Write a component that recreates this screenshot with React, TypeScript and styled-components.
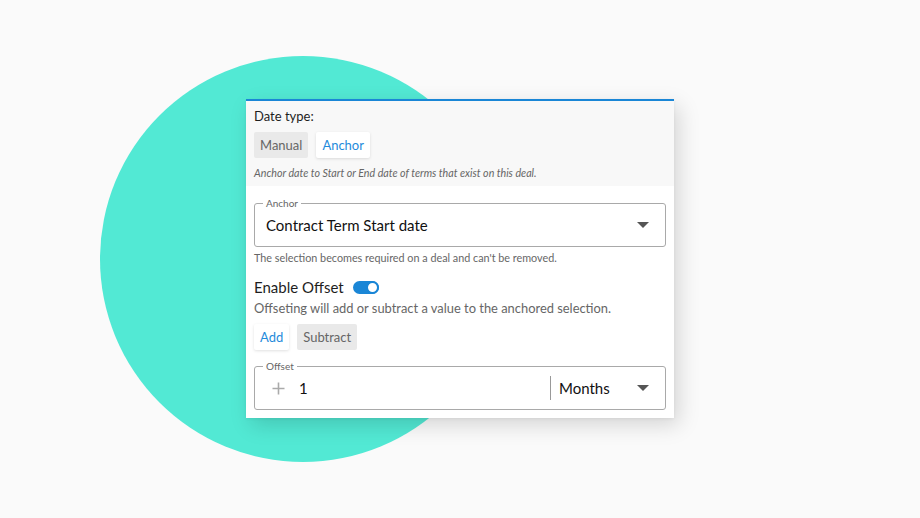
import React from "react";
import styled, { createGlobalStyle } from "styled-components";

const Global = createGlobalStyle`
  html, body { margin: 0; padding: 0; background: #fafafa; }
  body { font-family: Lato, "Noto Sans", sans-serif; }
`;

const Stage = styled.div`
  position: relative;
  width: 920px;
  height: 518px;
  overflow: hidden;
  background: #fafafa;
  display: flex;
  align-items: flex-start;
  padding: 99px 0 0 246px;
  box-sizing: border-box;
`;

const Circle = styled.div`
  position: absolute;
  left: 100px;
  top: 56px;
  width: 406px;
  height: 406px;
  border-radius: 50%;
  background: #52e9d4;
`;

const Card = styled.div`
  position: relative;
  width: 428px;
  background: #fff;
  border-top: 2px solid #1a86d6;
  box-shadow: 5px 7px 20px rgba(0, 0, 0, 0.15), 0 1px 3px rgba(0, 0, 0, 0.06);
  display: flex;
  flex-direction: column;
`;

const TopSection = styled.div`
  background: #f8f8f8;
  padding: 7px 8px 6px;
  display: flex;
  flex-direction: column;
`;

const Label = styled.div`
  font-size: 13px;
  line-height: 16px;
  color: #1e1e1e;
`;

const ButtonRow = styled.div<{ $mt: number }>`
  display: flex;
  gap: 8px;
  margin-top: ${(p) => p.$mt}px;
`;

const Choice = styled.div<{ $active?: boolean }>`
  height: 26px;
  padding: 0 6px;
  display: flex;
  align-items: center;
  font-size: 13px;
  border-radius: 2px;
  color: ${(p) => (p.$active ? "#1f8bdb" : "#666")};
  background: ${(p) => (p.$active ? "#fff" : "#e9e9e9")};
  box-shadow: ${(p) => (p.$active ? "0 1px 3px rgba(0,0,0,0.12)" : "none")};
`;

const Note = styled.div`
  margin-top: 8px;
  font-size: 10.7px;
  line-height: 14px;
  font-style: italic;
  color: #666;
`;

const Body = styled.div`
  padding: 17px 8px 8px;
  display: flex;
  flex-direction: column;
`;

const Field = styled.div`
  position: relative;
  height: 44px;
  border: 1px solid #a9a9a9;
  border-radius: 3px;
  box-sizing: border-box;
  display: flex;
  align-items: center;
  padding: 0 16px 0 11px;
`;

const Legend = styled.span`
  position: absolute;
  left: 8px;
  top: -7px;
  padding: 0 3px;
  background: #fff;
  font-size: 10px;
  line-height: 12px;
  color: #666;
`;

const Value = styled.div`
  flex: 1;
  font-size: 15px;
  color: #111;
`;

const Caret = styled.div`
  width: 0;
  height: 0;
  border-left: 6px solid transparent;
  border-right: 6px solid transparent;
  border-top: 6px solid #555;
`;

const Helper = styled.div`
  margin-top: 5px;
  font-size: 10.8px;
  line-height: 12px;
  color: #666;
`;

const OffsetHeader = styled.div`
  margin-top: 14px;
  display: flex;
  align-items: center;
  gap: 9px;
  font-size: 15px;
  line-height: 18px;
  color: #1e1e1e;
`;

const Toggle = styled.div`
  position: relative;
  width: 26px;
  height: 13px;
  border-radius: 7px;
  background: #1a86d6;
  &::after {
    content: "";
    position: absolute;
    right: 0;
    top: 0;
    width: 9px;
    height: 9px;
    border-radius: 50%;
    background: #fff;
    border: 2px solid #1a86d6;
    box-sizing: content-box;
  }
`;

const Desc = styled.div`
  margin-top: 4px;
  font-size: 12.9px;
  line-height: 16px;
  color: #666;
`;

const OffsetField = styled(Field)`
  margin-top: 16px;
  padding: 0 16px 0 17px;
`;

const PlusIcon = styled.svg`
  width: 13px;
  height: 13px;
  margin-right: 14px;
  flex-shrink: 0;
`;

const Num = styled.div`
  flex: 1;
  font-size: 15px;
  color: #111;
`;

const Divider = styled.div`
  width: 1px;
  height: 24px;
  background: #999;
  margin-right: 8px;
`;

const Unit = styled.div`
  font-size: 15px;
  color: #111;
  width: 78px;
`;

export default function App() {
  return (
    <>
      <Global />
      <Stage>
        <Circle />
        <Card>
          <TopSection>
            <Label>Date type:</Label>
            <ButtonRow $mt={8}>
              <Choice>Manual</Choice>
              <Choice $active>Anchor</Choice>
            </ButtonRow>
            <Note>Anchor date to Start or End date of terms that exist on this deal.</Note>
          </TopSection>
          <Body>
            <Field>
              <Legend>Anchor</Legend>
              <Value>Contract Term Start date</Value>
              <Caret />
            </Field>
            <Helper>The selection becomes required on a deal and can't be removed.</Helper>
            <OffsetHeader>
              Enable Offset
              <Toggle />
            </OffsetHeader>
            <Desc>Offseting will add or subtract a value to the anchored selection.</Desc>
            <ButtonRow $mt={8}>
              <Choice $active>Add</Choice>
              <Choice>Subtract</Choice>
            </ButtonRow>
            <OffsetField>
              <Legend>Offset</Legend>
              <PlusIcon viewBox="0 0 13 13">
                <path d="M6.5 0.5v12M0.5 6.5h12" stroke="#aaa" strokeWidth="1.6" fill="none" />
              </PlusIcon>
              <Num>1</Num>
              <Divider />
              <Unit>Months</Unit>
              <Caret />
            </OffsetField>
          </Body>
        </Card>
      </Stage>
    </>
  );
}
